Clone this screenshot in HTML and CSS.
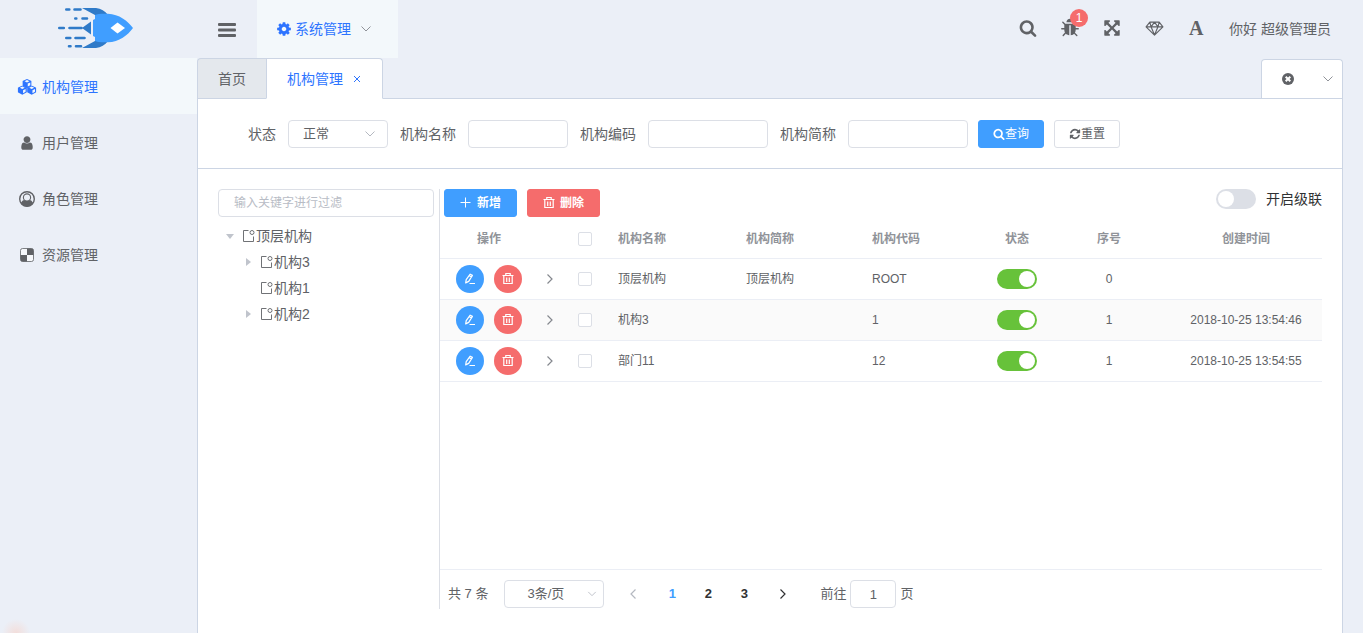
FILE: index.html
```html
<!DOCTYPE html>
<html lang="zh-CN">
<head>
<meta charset="utf-8">
<title>机构管理</title>
<link rel="stylesheet" href="styles.css">
</head>
<body>
<svg class="sprite" aria-hidden="true">
  <symbol id="search" viewBox="0 0 1792 1792"><path fill="currentColor" d="M1216 832q0-185-131.5-316.5t-316.5-131.5-316.5 131.5-131.5 316.5 131.5 316.5 316.5 131.5 316.5-131.5 131.5-316.5zm512 832q0 52-38 90t-90 38q-54 0-90-38l-343-342q-179 124-399 124-143 0-273.500-55.500t-225-150-150-225-55.500-273.500 55.500-273.500 150-225 225-150 273.500-55.500 273.500 55.500 225 150 150 225 55.500 273.500q0 220-124 399l343 343q37 37 37 90z"/></symbol>
  <symbol id="cog" viewBox="0 0 1792 1792"><path fill="currentColor" d="M1152 896q0-106-75-181t-181-75-181 75-75 181 75 181 181 75 181-75 75-181zm512-109v222q0 12-8 23t-20 13l-185 28q-19 54-39 91 35 50 107 138 10 12 10 25t-9 23q-27 37-99 108t-94 71q-12 0-26-9l-138-108q-44 23-91 38-16 136-29 186-7 28-36 28h-222q-14 0-24.500-8.500t-11.500-21.500l-28-184q-49-16-90-37l-141 107q-10 9-25 9-14 0-25-11-126-114-165-168-7-10-7-23 0-12 8-23 15-21 51-66.500t54-70.500q-27-50-41-99l-183-27q-13-2-21-12.500t-8-23.500v-222q0-12 8-23t19-13l186-28q14-46 39-92-40-57-107-138-10-12-10-24 0-10 9-23 26-36 98.500-107.500t94.500-71.500q13 0 26 10l138 107q44-23 91-38 16-136 29-186 7-28 36-28h222q14 0 24.500 8.500t11.500 21.500l28 184q49 16 90 37l142-107q9-9 24-9 13 0 25 10 129 119 165 170 7 8 7 22 0 12-8 23-15 21-51 66.500t-54 70.500q26 50 41 98l183 28q13 2 21 12.500t8 23.500z"/></symbol>
  <symbol id="refresh" viewBox="0 0 1792 1792"><path fill="currentColor" d="M1639 1056q0 5-1 7-64 268-268 434.500t-478 166.500q-146 0-282.500-55t-243.500-157l-129 129q-19 19-45 19t-45-19-19-45v-448q0-26 19-45t45-19h448q26 0 45 19t19 45-19 45l-137 137q71 66 161 102t187 36q134 0 250-65t186-179q11-17 53-117 8-23 30-23h192q13 0 22.500 9.500t9.500 22.500zm25-800v448q0 26-19 45t-45 19h-448q-26 0-45-19t-19-45 19-45l138-138q-148-137-349-137-134 0-250 65t-186 179q-11 17-53 117-8 23-30 23h-199q-13 0-22.500-9.500t-9.500-22.500v-7q65-268 270-434.500t480-166.500q146 0 284 55.500t245 156.500l130-129q19-19 45-19t45 19 19 45z"/></symbol>
  <symbol id="user" viewBox="0 0 1792 1792"><path fill="currentColor" d="M1536 1399q0 109-62.500 187t-150.500 78h-854q-88 0-150.500-78t-62.500-187q0-85 8.500-160.500t31.500-152 58.500-131 94-89 134.500-34.500q131 128 313 128t313-128q76 0 134.500 34.500t94 89 58.500 131 31.500 152 8.500 160.500zm-256-887q0 159-112.500 271.500t-271.500 112.500-271.500-112.500-112.500-271.500 112.500-271.500 271.500-112.500 271.500 112.500 112.500 271.500z"/></symbol>
  <symbol id="arrows" viewBox="0 0 1792 1792"><path fill="currentColor" d="M1411 541l-355 355 355 355 144-144q29-31 70-14 39 17 39 59v448q0 26-19 45t-45 19h-448q-42 0-59-40-17-39 14-69l144-144-355-355-355 355 144 144q31 30 14 69-17 40-59 40h-448q-26 0-45-19t-19-45v-448q0-42 40-59 39-17 69 14l144 144 355-355-355-355-144 144q-19 19-45 19-12 0-24-5-40-17-40-59v-448q0-26 19-45t45-19h448q42 0 59 40 17 39-14 69l-144 144 355 355 355-355-144-144q-31-30-14-69 17-40 59-40h448q26 0 45 19t19 45v448q0 42-39 59-13 5-25 5-26 0-45-19z"/></symbol>
  <symbol id="bug" viewBox="0 0 1792 1792"><path fill="currentColor" d="M1696 960q0 26-19 45t-45 19h-224q0 171-67 290l208 209q19 19 19 45t-19 45q-18 19-45 19t-45-19l-198-197q-5 5-15 13t-42 28.500-65 36.500-82 29-97 13v-896h-128v896q-51 0-101.500-13.500t-87-33-66-39-43.500-32.500l-15-14-183 207q-20 21-48 21-24 0-43-16-19-18-20.500-44.500t15.500-46.500l202-227q-58-114-58-274h-224q-26 0-45-19t-19-45 19-45 45-19h224v-294l-173-173q-19-19-19-45t19-45 45-19 45 19l173 173h844l173-173q19-19 45-19t45 19 19 45-19 45l-173 173v294h224q26 0 45 19t19 45zm-480-576h-640q0-133 93.500-226.500t226.500-93.500 226.500 93.500 93.500 226.500z"/></symbol>
  <symbol id="bars" viewBox="0 0 18 14"><g fill="currentColor"><rect width="18" height="3" rx="1"/><rect y="5.500" width="18" height="3" rx="1"/><rect y="11" width="18" height="3" rx="1"/></g></symbol>
  <symbol id="diamond" viewBox="0 0 20 16"><path fill="none" stroke="currentColor" stroke-width="1.200" stroke-linejoin="round" d="M5 1.200h10l4 5L10 15 1 6.200zM1 6.200h18M10 1.200L6.300 6.200 10 15l3.700-8.800L10 1.200M5 1.200l1.300 5M15 1.200l-1.300 5"/></symbol>
  <symbol id="cube" viewBox="0 0 10 10"><path fill="currentColor" fill-rule="evenodd" d="M5 0l4.800 2.200v5L5 9.800.200 7.200v-5zM5 1.100L2.400 2.400 5 3.700l2.600-1.300zM5.800 4.900v3.200l2.700-1.500V3.600z"/></symbol>
  <symbol id="cubes" viewBox="0 0 20 17"><use href="#cube" x="5" y="0" width="10" height="10"/><use href="#cube" x="0" y="7" width="10" height="10"/><use href="#cube" x="10" y="7" width="10" height="10"/></symbol>
  <symbol id="person" viewBox="0 0 16 16"><circle cx="8" cy="8" r="7.300" fill="none" stroke="currentColor" stroke-width="1.400"/><path fill="currentColor" d="M1.800 12C3 10 4 9.300 5.300 9c1.500 1.300 3.900 1.300 5.400 0 1.300.3 2.300 1 3.500 3A7.500 7.500 0 0 1 8 15.500 7.500 7.500 0 0 1 1.800 12z"/><circle cx="8" cy="6.500" r="3.600" fill="#ebeff7" stroke="currentColor" stroke-width="1.100"/></symbol>
  <symbol id="delicious" viewBox="0 0 14 14"><rect x=".5" y=".5" width="13" height="13" rx="2" fill="#f6f8fb" stroke="currentColor" stroke-width=".8"/><path fill="currentColor" d="M7 0.500h4.500a2 2 0 0 1 2 2V7H7zM.500 7H7v6.500H2.500a2 2 0 0 1-2-2z"/></symbol>
  <symbol id="clear" viewBox="0 0 12 12"><circle cx="6" cy="6" r="6" fill="currentColor"/><path stroke="#fff" stroke-width="2" d="M3.700 3.700l4.600 4.600M8.300 3.700L3.700 8.300"/></symbol>
  <symbol id="down" viewBox="0 0 12 12"><path fill="none" stroke="currentColor" d="M1.500 3.500L6 8l4.500-4.500"/></symbol>
  <symbol id="right" viewBox="0 0 12 12"><path fill="none" stroke="currentColor" stroke-width="1.200" d="M3.500 1.500L8 6l-4.500 4.500"/></symbol>
  <symbol id="left" viewBox="0 0 12 12"><path fill="none" stroke="currentColor" stroke-width="1.200" d="M8.500 1.500L4 6l4.500 4.500"/></symbol>
  <symbol id="close" viewBox="0 0 8 8"><path fill="none" stroke="currentColor" d="M1 1l6 6M7 1L1 7"/></symbol>
  <symbol id="plus" viewBox="0 0 12 12"><path fill="none" stroke="currentColor" d="M5.500 .5v10M.5 5.500h10"/></symbol>
  <symbol id="trash" viewBox="0 0 12 12"><path fill="none" stroke="currentColor" stroke-width="1.200" d="M.5 2.500h11M3.800 2.500v-2h4.400v2M1.800 2.500v8h8.400v-8M4.700 4.500v4.500M7.300 4.500v4.500"/></symbol>
  <symbol id="edit" viewBox="0 0 12 12"><path fill="none" stroke="currentColor" stroke-width="1.200" stroke-linejoin="round" d="M6.200 1.200l2.200 1.200-3.700 6-3 1.500.5-3.200zM5.300 2.800l2.200 1.200M5.500 10.500H11"/></symbol>
  <symbol id="node" viewBox="0 0 14 14"><path fill="none" stroke="currentColor" stroke-width=".9" d="M6.500 1.500h-5v11h10v-5"/><circle cx="10" cy="3.500" r="2" fill="none" stroke="currentColor" stroke-width=".9"/></symbol>
</svg>

<div class="app">
  <header class="topbar">
    <a class="brand" href="#" aria-label="首页">
      <svg class="logo" viewBox="0 0 75 40">
        <g stroke="#2f7ac8" stroke-width="2.600" stroke-linecap="round">
          <path d="M8.300 1.500h3M16.500 1.500h6M17.300 10.500h1M24.500 10.500h4.500M1.300 20h4.500M11.500 20h12M8.300 30h4M17.500 30h9M11 38.300h1.500M18 38.300h5"/>
        </g>
        <path fill="#2f7ac8" d="M24 0h14c5 .5 9 3 12 7l-13 3v-3zM24 40h14c5-.5 9-3 12-7l-13-3v3zM24 20l9-6.500v13z"/>
        <path fill="#409eff" d="M35 12l2-1V7c2-1 6-1.500 13-1.300C61 6 70 13 75 20c-5 7-14 14-25 14.300-7 .2-11-.3-13-1.300v-4l-2-1z"/>
        <path fill="#fff" d="M52.500 20l7-5.500 7.500 5.500-7.500 5.500z"/>
      </svg>
    </a>
    <button class="icon-button menu-toggle" type="button" aria-label="菜单"><svg class="i-bars"><use href="#bars"/></svg></button>
    <nav class="topnav"><a href="#"><svg class="i16"><use href="#cog"/></svg>系统管理<svg class="i12 chevron"><use href="#down"/></svg></a></nav>
    <div class="tools">
      <button class="icon-button" type="button" aria-label="搜索"><svg class="i18"><use href="#search"/></svg></button>
      <button class="icon-button" type="button" aria-label="日志"><span class="badge-host"><svg class="i20"><use href="#bug"/></svg><span class="badge">1</span></span></button>
      <button class="icon-button" type="button" aria-label="全屏"><svg class="i18"><use href="#arrows"/></svg></button>
      <button class="icon-button" type="button" aria-label="主题"><svg class="i-diamond"><use href="#diamond"/></svg></button>
      <button class="icon-button font-button" type="button">A</button>
      <span class="greeting">你好 超级管理员</span>
    </div>
  </header>

  <aside class="sidebar">
    <nav>
      <a class="side-link active" href="#"><svg><use href="#cubes"/></svg>机构管理</a>
      <a class="side-link" href="#"><svg><use href="#user"/></svg>用户管理</a>
      <a class="side-link" href="#"><svg><use href="#person"/></svg>角色管理</a>
      <a class="side-link" href="#"><svg class="small"><use href="#delicious"/></svg>资源管理</a>
    </nav>
  </aside>

  <main class="main">
    <div class="tabbar">
      <a class="tab" href="#">首页</a>
      <div class="tab current"><a href="#">机构管理</a><button type="button" class="tab-close" aria-label="关闭"><svg><use href="#close"/></svg></button></div>
      <div class="tab-tools">
        <button type="button" aria-label="关闭全部"><svg class="i12"><use href="#clear"/></svg></button>
        <button type="button" class="chevron" aria-label="更多"><svg class="i12"><use href="#down"/></svg></button>
      </div>
    </div>

    <form class="filters">
      <label for="status">状态</label>
      <span class="select"><select id="status"><option>正常</option></select><svg class="i12"><use href="#down"/></svg></span>
      <label for="name">机构名称</label><input id="name" class="field short" type="text">
      <label for="code">机构编码</label><input id="code" class="field" type="text">
      <label for="abbr">机构简称</label><input id="abbr" class="field" type="text">
      <div class="actions">
        <button class="btn primary" type="button"><svg class="i12"><use href="#search"/></svg>查询</button>
        <button class="btn" type="button"><svg class="i12"><use href="#refresh"/></svg>重置</button>
      </div>
    </form>

    <div class="split">
      <section class="tree-pane">
        <input class="field" type="text" placeholder="输入关键字进行过滤" aria-label="输入关键字进行过滤">
        <ul class="tree">
          <li><div class="node"><i class="caret open"></i><svg><use href="#node"/></svg>顶层机构</div>
            <ul>
              <li><div class="node"><i class="caret"></i><svg><use href="#node"/></svg>机构3</div></li>
              <li><div class="node"><i class="caret leaf"></i><svg><use href="#node"/></svg>机构1</div></li>
              <li><div class="node"><i class="caret"></i><svg><use href="#node"/></svg>机构2</div></li>
            </ul>
          </li>
        </ul>
      </section>

      <section class="list-pane">
        <div class="toolbar">
          <button class="btn primary wide" type="button"><svg class="i12"><use href="#plus"/></svg>新增</button>
          <button class="btn danger wide" type="button"><svg class="i12"><use href="#trash"/></svg>删除</button>
          <label class="cascade"><input class="switch" type="checkbox">开启级联</label>
        </div>
        <div class="table-area">
          <table>
            <colgroup><col class="c-op"><col class="c-expand"><col class="c-check"><col class="c-name"><col class="c-abbr"><col class="c-code"><col class="c-status"><col class="c-order"><col class="c-time"></colgroup>
            <thead>
              <tr><th class="mid">操作</th><th></th><th class="mid"><input class="check" type="checkbox" aria-label="全选"></th><th>机构名称</th><th>机构简称</th><th>机构代码</th><th class="mid">状态</th><th class="mid">序号</th><th class="mid">创建时间</th></tr>
            </thead>
            <tbody>
              <tr>
                <td><div class="ops"><button class="round primary" type="button" aria-label="编辑"><svg class="i12"><use href="#edit"/></svg></button><button class="round danger" type="button" aria-label="删除"><svg class="i12"><use href="#trash"/></svg></button></div></td>
                <td class="mid"><button class="expand" type="button" aria-label="展开"><svg class="i12"><use href="#right"/></svg></button></td>
                <td class="mid"><input class="check" type="checkbox" aria-label="选择"></td>
                <td>顶层机构</td><td>顶层机构</td><td>ROOT</td>
                <td class="mid"><input class="switch" type="checkbox" checked aria-label="状态"></td><td class="mid">0</td><td class="mid"></td>
              </tr>
              <tr>
                <td><div class="ops"><button class="round primary" type="button" aria-label="编辑"><svg class="i12"><use href="#edit"/></svg></button><button class="round danger" type="button" aria-label="删除"><svg class="i12"><use href="#trash"/></svg></button></div></td>
                <td class="mid"><button class="expand" type="button" aria-label="展开"><svg class="i12"><use href="#right"/></svg></button></td>
                <td class="mid"><input class="check" type="checkbox" aria-label="选择"></td>
                <td>机构3</td><td></td><td>1</td>
                <td class="mid"><input class="switch" type="checkbox" checked aria-label="状态"></td><td class="mid">1</td><td class="mid">2018-10-25 13:54:46</td>
              </tr>
              <tr>
                <td><div class="ops"><button class="round primary" type="button" aria-label="编辑"><svg class="i12"><use href="#edit"/></svg></button><button class="round danger" type="button" aria-label="删除"><svg class="i12"><use href="#trash"/></svg></button></div></td>
                <td class="mid"><button class="expand" type="button" aria-label="展开"><svg class="i12"><use href="#right"/></svg></button></td>
                <td class="mid"><input class="check" type="checkbox" aria-label="选择"></td>
                <td>部门11</td><td></td><td>12</td>
                <td class="mid"><input class="switch" type="checkbox" checked aria-label="状态"></td><td class="mid">1</td><td class="mid">2018-10-25 13:54:55</td>
              </tr>
            </tbody>
          </table>
        </div>
        <div class="pagination">
          <span>共 7 条</span>
          <span class="select page-size"><select aria-label="每页条数"><option>3条/页</option></select><svg class="i10"><use href="#down"/></svg></span>
          <div class="pager">
            <button class="step" type="button" disabled aria-label="上一页"><svg class="i12"><use href="#left"/></svg></button>
            <button class="current" type="button">1</button>
            <button type="button">2</button>
            <button type="button">3</button>
            <button class="step" type="button" aria-label="下一页"><svg class="i12"><use href="#right"/></svg></button>
          </div>
          <label class="jump">前往<input class="field" type="text" value="1">页</label>
        </div>
      </section>
    </div>
  </main>
</div>
</body>
</html>
```

FILE: styles.css
```css
* { box-sizing: border-box; }

body {
  margin: 0;
  background: #ebeff7;
  color: #606266;
  font: 14px/20px "Liberation Sans", "Noto Sans CJK SC", sans-serif;
}

a { color: inherit; text-decoration: none; }
button, input, select { margin: 0; font: inherit; color: inherit; }
button { padding: 0; border: 0; background: none; cursor: pointer; }
svg { display: block; flex: none; overflow: visible; }
ul { margin: 0; padding: 0; list-style: none; }

.sprite { position: absolute; width: 0; height: 0; }
.i10 { width: 10px; height: 10px; }
.i12 { width: 12px; height: 12px; }
.i16 { width: 16px; height: 16px; }
.i18 { width: 18px; height: 18px; }
.i20 { width: 20px; height: 20px; }
.i-bars { width: 18px; height: 14px; }
.i-diamond { width: 19px; height: 15px; }

.app {
  display: grid;
  grid-template: 58px 1fr / 197px minmax(0, 1fr);
  height: 100vh;
}

/* Top bar */
.topbar { grid-column: 1 / -1; display: flex; align-items: stretch; }
.brand {
  width: 197px;
  padding: 8px 6px 0 0;
  display: flex;
  justify-content: center;
  align-items: flex-start;
}
.logo { width: 75px; height: 40px; }
.icon-button {
  width: 42px;
  display: flex;
  align-items: center;
  justify-content: center;
}
.menu-toggle { width: 60px; padding-top: 2px; }
.topnav a {
  height: 100%;
  padding: 0 26px 0 19px;
  display: flex;
  align-items: center;
  gap: 3px;
  background: #f3f8fb;
  color: #2d74ff;
}
.topnav .chevron { margin-left: 6px; }
.chevron { color: #909399; }
.tools {
  margin-left: auto;
  padding: 0 32px 2px 0;
  display: flex;
  align-items: stretch;
}
.badge-host { position: relative; }
.badge {
  position: absolute;
  top: -9px;
  left: 10px;
  width: 18px;
  height: 18px;
  border-radius: 9px;
  background: #f56c6c;
  color: #fff;
  font-size: 12px;
  line-height: 18px;
}
.font-button { font: bold 20px/24px "Liberation Serif", serif; }
.greeting { align-self: center; margin-left: 12px; padding-top: 2px; }

/* Side menu */
.sidebar { background: radial-gradient(circle 14px at 16px 100%, #f3dedb 0, #ebeff7 100%); }
.side-link {
  height: 56px;
  padding-left: 17px;
  display: flex;
  align-items: center;
  gap: 5px;
  border-top: 2px solid transparent;
}
.side-link svg { width: 20px; height: 16px; }
.side-link svg.small { height: 14px; }
.side-link.active { background: #f3f8fb; color: #2d74ff; }

/* Tabs */
.main {
  margin-right: 20px;
  display: flex;
  flex-direction: column;
  min-height: 0;
  background: #fff;
  border: solid #ccd5e4;
  border-width: 0 1px;
  border-top-left-radius: 4px;
}
.tabbar {
  height: 41px;
  margin: 0 -1px;
  display: flex;
  border-bottom: 1px solid #ccd5e4;
  background: #ebeff7;
}
.tab {
  height: 41px;
  padding: 0 20px;
  display: flex;
  align-items: center;
  border: 1px solid #ccd5e4;
  border-right-width: 0;
  border-top-left-radius: 4px;
  background: #e4e8ed;
}
.tab.current {
  border-right-width: 1px;
  border-bottom-color: #fff;
  border-radius: 0 4px 0 0;
  background: #fff;
  color: #2d74ff;
}
.tab-close { width: 9px; margin-left: 10px; }
.tab-close svg { width: 8px; height: 8px; }
.tab-tools {
  margin-left: auto;
  margin-top: 1px;
  display: flex;
  border: 1px solid #ccd5e4;
  border-bottom: 0;
  border-radius: 4px 4px 0 0;
  background: #fff;
}
.tab-tools button { width: 52px; display: grid; place-items: center; }
.tab-tools .chevron { width: 28px; }

/* Form controls */
.field, .select select {
  height: 28px;
  border: 1px solid #dcdfe6;
  border-radius: 4px;
  background: #fff;
  outline: 0;
}
.field { width: 120px; padding: 0 15px; font-size: 12px; }
.field.short { width: 100px; }
.field::placeholder { color: #b8bcc5; opacity: 1; }
.select { position: relative; width: 100px; }
.select select { width: 100%; padding: 0 30px 0 14px; font-size: 13px; appearance: none; }
.select svg { position: absolute; right: 12px; top: 8px; color: #b4b8c0; pointer-events: none; }

.btn {
  height: 28px;
  padding: 0 14px;
  display: flex;
  align-items: center;
  border: 1px solid #dcdfe6;
  border-radius: 3px;
  background: #fff;
  font-size: 12px;
}
.btn.wide { padding: 0 15px; gap: 5px; font-weight: bold; }
.primary, .btn.primary { background: #409eff; border-color: #409eff; color: #fff; }
.danger, .btn.danger { background: #f56c6c; border-color: #f56c6c; color: #fff; }

.check {
  appearance: none;
  display: block;
  width: 14px;
  height: 14px;
  margin: 0 auto;
  border: 1px solid #dcdfe6;
  border-radius: 2px;
  background: #fff;
}
.switch {
  appearance: none;
  display: block;
  width: 40px;
  height: 20px;
  border-radius: 10px;
  padding: 2px;
  background: #dcdfe6;
}
.switch::before {
  content: "";
  display: block;
  width: 16px;
  height: 16px;
  border-radius: 8px;
  background: #fff;
}
.switch:checked { background: #67c23a; }
.switch:checked::before { margin-left: auto; }

.filters {
  padding: 21px 50px 20px;
  display: flex;
  flex-wrap: wrap;
  align-items: center;
  gap: 12px;
  border-bottom: 1px solid #ccd5e4;
}
.actions { display: flex; gap: 10px; margin-left: -2px; }

/* Organisation tree */
.split {
  flex: 1;
  min-height: 0;
  padding: 20px 20px 24px;
  display: grid;
  grid-template-columns: 222px minmax(0, 1fr);
}
.tree-pane { padding-right: 5px; border-right: 1px solid #dcdfe6; }
.tree-pane .field { display: block; width: 100%; }
.tree { margin-top: 6px; }
.tree ul { padding-left: 18px; }
.node { height: 26px; padding-left: 8px; display: flex; align-items: center; }
.node svg { width: 14px; height: 14px; }
.caret { width: 16px; }
.caret::before {
  content: "";
  display: block;
  width: 0;
  margin-left: 2px;
  border: 4px solid transparent;
  border-left: 5px solid #c0c4cc;
  border-right: 0;
}
.caret.open::before {
  margin-left: 0;
  border: 4px solid transparent;
  border-top: 5px solid #c0c4cc;
  border-bottom: 0;
}
.caret.leaf::before { visibility: hidden; }

/* Organisation list */
.list-pane { display: flex; flex-direction: column; min-height: 0; }
.toolbar { height: 29px; padding-left: 4px; display: flex; align-items: flex-start; gap: 10px; }
.cascade { margin-left: auto; display: flex; gap: 10px; color: #303133; }
.table-area { flex: 1; min-height: 0; overflow: auto; border-bottom: 1px solid #ebeef5; }
table {
  width: 100%;
  table-layout: fixed;
  border-collapse: separate;
  border-spacing: 0;
  font-size: 12px;
}
.c-op { width: 98px; }
.c-expand { width: 24px; }
.c-check { width: 46px; }
.c-name { width: 128px; }
.c-abbr { width: 126px; }
.c-code { width: 124px; }
.c-status { width: 62px; }
.c-order { width: 122px; }
.c-time { width: 152px; }
th, td { height: 41px; padding: 0 10px; border-bottom: 1px solid #ebeef5; text-align: left; }
th, th.mid { padding-top: 2px; color: #909399; font-weight: bold; }
.mid { padding: 0; text-align: center; }
td .switch { margin: 0 auto; }
tbody tr:nth-child(even) { background: #fafafa; }
.ops { display: flex; gap: 10px; padding-left: 6px; }
.round { width: 28px; height: 28px; border-radius: 14px; display: grid; place-items: center; }
.expand { display: block; margin: 0 auto; color: #85888e; }

/* Pagination */
.pagination {
  padding: 10px 0 1px 8px;
  display: flex;
  align-items: center;
  font-size: 13px;
}
.page-size { margin-left: 16px; }
.page-size select { padding: 0 30px 0 22px; }
.page-size svg { right: 7px; top: 9px; }
.pager { margin: 0 16px 0 8px; display: flex; color: #303133; font-weight: bold; }
.pager button { width: 36px; height: 28px; display: grid; place-items: center; }
.pager .step { width: 42px; }
.pager .current { color: #409eff; }
.pager button:disabled { color: #b4b8c0; }
.jump { display: flex; align-items: center; gap: 4px; }
.jump .field { width: 46px; padding: 0; text-align: center; font-size: 13px; }
```
